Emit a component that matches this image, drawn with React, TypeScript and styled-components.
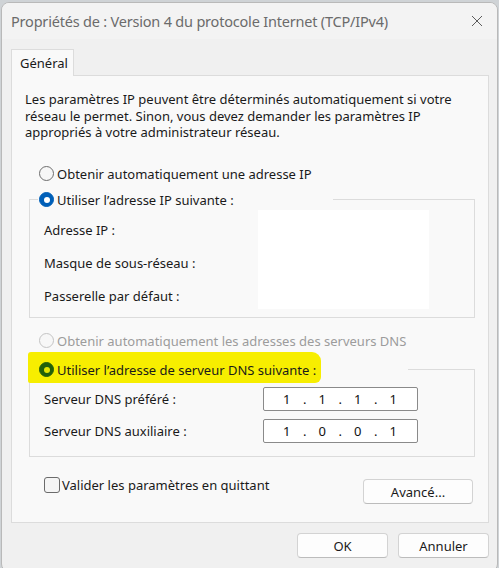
import React from 'react';
import styled, { createGlobalStyle } from 'styled-components';

const GlobalStyle = createGlobalStyle`
  html, body {
    margin: 0;
    padding: 0;
    background: #cfd3d6;
    overflow: hidden;
  }
  * {
    box-sizing: border-box;
  }
`;

const UI_FONT = `"Noto Sans", "Open Sans", Arial, sans-serif`;

const Window = styled.div`
  margin: 2px 1px 0 1px;
  width: 497px;
  height: 570px;
  background: #f0f0f0;
  border: 1px solid #b9b9b9;
  border-radius: 8px;
  display: flex;
  flex-direction: column;
  font-family: ${UI_FONT};
  font-size: 13px;
  color: #1a1a1a;
  overflow: hidden;
`;

const TitleBar = styled.div`
  height: 36px;
  display: flex;
  align-items: center;
  justify-content: space-between;
  padding: 0 14px 0 9px;
  background: #f3f3f3;
`;

const Title = styled.span`
  font-size: 14.5px;
  color: #6b6b6b;
  letter-spacing: -0.2px;
`;

const CloseButton = styled.div`
  width: 12px;
  height: 12px;
  display: flex;
  align-items: center;
  justify-content: center;
`;

const Body = styled.div`
  padding: 10px 0 0 9px;
`;

const TabStrip = styled.div`
  display: flex;
  margin-bottom: -1px;
  position: relative;
  z-index: 1;
`;

const Tab = styled.div`
  width: 63px;
  height: 27px;
  padding: 4px 0 0 8px;
  background: #f9f9f9;
  border: 1px solid #dcdcdc;
  border-bottom: none;
`;

const Panel = styled.div`
  width: 478px;
  height: 448px;
  background: #f9f9f9;
  border: 1px solid #dcdcdc;
  padding: 15px 13px 0 13px;
  display: flex;
  flex-direction: column;
`;

const Intro = styled.p`
  margin: 0;
  line-height: 16.5px;
`;

const OptionRow = styled.div<{ $indent: number; $top: number; $disabled?: boolean }>`
  display: flex;
  align-items: center;
  gap: 3px;
  height: 16px;
  margin: ${({ $top }) => $top}px 0 0 ${({ $indent }) => $indent}px;
  color: ${({ $disabled }) => ($disabled ? '#9c9c9c' : '#1a1a1a')};
`;

const RadioCircle = styled.span<{ $checked?: boolean; $disabled?: boolean; $marked?: boolean }>`
  width: 15px;
  height: 15px;
  border-radius: 50%;
  flex: none;
  display: flex;
  align-items: center;
  justify-content: center;
  background: ${({ $checked, $marked }) =>
    $marked ? '#22600a' : $checked ? '#005fb8' : '#f7f7f7'};
  border: 1px solid
    ${({ $checked, $disabled, $marked }) =>
      $marked ? '#22600a' : $checked ? '#005fb8' : $disabled ? '#c4c4c4' : '#6e6e6e'};

  &::after {
    content: '';
    display: ${({ $checked }) => ($checked ? 'block' : 'none')};
    width: 6px;
    height: 6px;
    border-radius: 50%;
    background: ${({ $marked }) => ($marked ? '#e4e400' : '#ffffff')};
  }
`;

const Group = styled.fieldset<{ $top: number }>`
  margin: ${({ $top }) => $top}px 0 0 4px;
  width: 446px;
  border: 1px solid #dcdcdc;
  padding: 0 8px;
  min-width: 0;
`;

const GroupLegend = styled.legend<{ $width: number }>`
  width: ${({ $width }) => $width}px;
  padding: 0 0 0 1px;
  height: 16px;
  display: flex;
  align-items: center;
  gap: 3px;
  position: relative;
  background: #f9f9f9;
`;

const Marker = styled.span`
  position: absolute;
  left: -10px;
  top: -10px;
  width: 293px;
  height: 31px;
  background: #f7ee00;
  border-radius: 3px 9px 6px 2px;
  z-index: 0;
`;

const LegendText = styled.span`
  position: relative;
  z-index: 1;
  display: flex;
  align-items: center;
  gap: 3px;
`;

const IpGrid = styled.div`
  display: grid;
  grid-template-columns: 214px 171px;
  grid-template-rows: repeat(3, 33px);
  padding: 2px 0 8px 6px;
`;

const FieldLabel = styled.span`
  line-height: 16px;
  padding-top: 12px;
`;

const HiddenFields = styled.div`
  grid-column: 2;
  grid-row: 1 / span 3;
  background: #ffffff;
`;

const DnsGrid = styled.div`
  display: grid;
  grid-template-columns: 219px 155px;
  grid-auto-rows: 24px;
  row-gap: 8px;
  align-items: center;
  padding: 9px 0 13px 6px;
`;

const IpBox = styled.div`
  height: 24px;
  background: #ffffff;
  border: 1px solid #8a8a8a;
  border-radius: 2px;
  display: flex;
  align-items: center;
  padding-left: 11px;
  font-size: 13px;
  color: #111;
`;

const Octet = styled.span`
  width: 37.5px;
  display: flex;
  justify-content: space-between;
  padding-left: 8px;
  padding-right: 4px;
`;

const Footer = styled.div`
  display: flex;
  align-items: flex-start;
  justify-content: space-between;
  margin-top: auto;
  padding: 0 2px 18px 19px;
`;

const CheckRow = styled.label`
  display: flex;
  align-items: center;
  gap: 2px;
  margin-top: -3px;
`;

const CheckBox = styled.span`
  width: 16px;
  height: 16px;
  border: 1px solid #6b6b6b;
  border-radius: 3px;
  background: #f5f5f5;
`;

const Button = styled.button<{ $width: number }>`
  width: ${({ $width }) => $width}px;
  height: 25px;
  background: #fdfdfd;
  border: 1px solid #d3d3d3;
  border-bottom-color: #bcbcbc;
  border-radius: 4px;
  font-family: ${UI_FONT};
  font-size: 13px;
  color: #1a1a1a;
  padding: 0;
`;

const DialogButtons = styled.div`
  display: flex;
  justify-content: flex-end;
  gap: 10px;
  padding: 10px 8px 0 0;
`;

function IpValue({ parts }: { parts: string[] }) {
  return (
    <IpBox>
      {parts.map((p, i) => (
        <Octet key={i}>
          <span>{p}</span>
          <span>{i < 3 ? '.' : ''}</span>
        </Octet>
      ))}
    </IpBox>
  );
}

export default function App() {
  return (
    <>
      <GlobalStyle />
      <Window>
        <TitleBar>
          <Title>Propriétés de : Version 4 du protocole Internet (TCP/IPv4)</Title>
          <CloseButton>
            <svg width="12" height="12" viewBox="0 0 12 12">
              <path d="M1 1 L11 11 M11 1 L1 11" stroke="#5c5c5c" strokeWidth="1" fill="none" />
            </svg>
          </CloseButton>
        </TitleBar>
        <Body>
          <TabStrip>
            <Tab>Général</Tab>
          </TabStrip>
          <Panel>
            <Intro>
              Les paramètres IP peuvent être déterminés automatiquement si votre
              <br />
              réseau le permet. Sinon, vous devez demander les paramètres IP
              <br />
              appropriés à votre administrateur réseau.
            </Intro>

            <OptionRow $indent={14} $top={25}>
              <RadioCircle />
              Obtenir automatiquement une adresse IP
            </OptionRow>

            <Group $top={10}>
              <GroupLegend $width={295}>
                <RadioCircle $checked />
                Utiliser l’adresse IP suivante :
              </GroupLegend>
              <IpGrid>
                <FieldLabel>Adresse IP :</FieldLabel>
                <HiddenFields />
                <FieldLabel>Masque de sous-réseau :</FieldLabel>
                <FieldLabel>Passerelle par défaut :</FieldLabel>
              </IpGrid>
            </Group>

            <OptionRow $indent={14} $top={15} $disabled>
              <RadioCircle $disabled />
              Obtenir automatiquement les adresses des serveurs DNS
            </OptionRow>

            <Group $top={13}>
              <GroupLegend $width={370}>
                <Marker />
                <LegendText>
                  <RadioCircle $checked $marked />
                  Utiliser l’adresse de serveur DNS suivante :
                </LegendText>
              </GroupLegend>
              <DnsGrid>
                <span>Serveur DNS préféré :</span>
                <IpValue parts={['1', '1', '1', '1']} />
                <span>Serveur DNS auxiliaire :</span>
                <IpValue parts={['1', '0', '0', '1']} />
              </DnsGrid>
            </Group>

            <Footer>
              <CheckRow>
                <CheckBox />
                Valider les paramètres en quittant
              </CheckRow>
              <Button $width={110}>Avancé...</Button>
            </Footer>
          </Panel>
          <DialogButtons>
            <Button $width={91}>OK</Button>
            <Button $width={91}>Annuler</Button>
          </DialogButtons>
        </Body>
      </Window>
    </>
  );
}
